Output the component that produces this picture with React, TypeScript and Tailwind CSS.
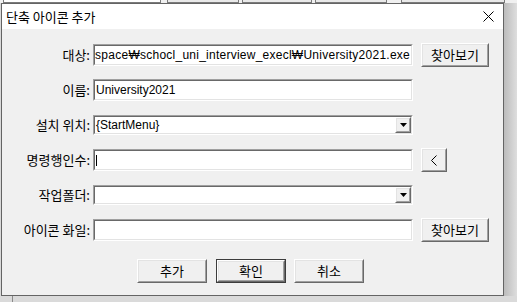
import type { ReactNode } from "react";

const KR = "font-['Noto_Sans_CJK_KR','Liberation_Sans',sans-serif]";
const LAT = "font-['Liberation_Sans','Noto_Sans_CJK_KR',sans-serif]";

function Sunken({ w, h, children }: { w: string; h: string; children?: ReactNode }) {
  return (
    <div className={`${w} ${h} border border-t-[#a0a0a0] border-l-[#a0a0a0] border-b-white border-r-white`}>
      <div className="h-full w-full border border-t-[#696969] border-l-[#696969] border-b-[#e3e3e3] border-r-[#e3e3e3] bg-white flex items-center overflow-hidden">
        {children}
      </div>
    </div>
  );
}

function Raised({ className, children, isDefault }: { className: string; children?: ReactNode; isDefault?: boolean }) {
  const inner = (
    <div className="h-full w-full border border-t-white border-l-white border-b-[#696969] border-r-[#696969]">
      <div className="h-full w-full border border-t-[#e3e3e3] border-l-[#e3e3e3] border-b-[#a0a0a0] border-r-[#a0a0a0] bg-[#f0f0f0] flex items-center justify-center">
        {children}
      </div>
    </div>
  );
  if (isDefault) {
    return <div className={`${className} border border-[#3c3c3c]`}>{inner}</div>;
  }
  return <div className={className}>{inner}</div>;
}

function Combo({ text }: { text?: string }) {
  return (
    <Sunken w="w-[320px]" h="h-[20px]">
      <div className={`flex-1 pl-[1px] text-[12px] text-black ${LAT}`}>{text}</div>
      <Raised className="w-[16px] h-[16px]">
        <svg width="7" height="4" viewBox="0 0 7 4">
          <path d="M0 0H7L3.5 4Z" fill="#000" />
        </svg>
      </Raised>
    </Sunken>
  );
}

function Row({ label, children, first }: { label: string; children: ReactNode; first?: boolean }) {
  return (
    <div className={`flex items-center h-[24px] ${first ? "" : "mt-[11px]"}`}>
      <div className={`w-[91px] pr-[3px] text-right text-[13px] text-black whitespace-nowrap ${KR}`}>{label}</div>
      {children}
    </div>
  );
}

function BgButton({ w }: { w: string }) {
  return <div className={`${w} h-full border-x border-b border-[#7a7a7a] bg-[#e9e9e9]`} />;
}

export default function App() {
  return (
    <div className="w-[517px] h-[302px] bg-[#d9d9d9] flex flex-col overflow-hidden">
      {/* window behind the dialog */}
      <div className="h-[3px] flex bg-[#f0f0f0] shrink-0">
        <div className="w-[3px]" />
        <div className="w-[158px] h-full border-x border-b border-[#7a7a7a] bg-white" />
        <div className="w-[6px]" />
        <BgButton w="w-[72px]" />
        <div className="w-[3px]" />
        <BgButton w="w-[70px]" />
        <div className="w-[3px]" />
        <BgButton w="w-[72px]" />
        <div className="w-[14px]" />
        <BgButton w="w-[104px]" />
      </div>

      <div className="flex h-[293px] shrink-0">
        <div className="w-[1px]" />
        <div className="w-[503px] h-full border border-[#646464] bg-[#f0f0f0] flex flex-col">
          <div className="h-[25px] bg-white flex items-center justify-between pl-[4px] pr-[9px] shrink-0">
            <span className={`text-[13px] text-black ${KR}`}>단축 아이콘 추가</span>
            <svg width="11" height="11" viewBox="0 0 11 11">
              <path d="M0.5 0.5L10.5 10.5M10.5 0.5L0.5 10.5" stroke="#000" strokeWidth="1" />
            </svg>
          </div>

          <div className="flex flex-col pt-[14px]">
            <Row label="대상:" first>
              <Sunken w="w-[320px]" h="h-[22px]">
                <div className={`w-full flex justify-end pr-[1px] text-[12px] tracking-[0.25px] text-black whitespace-nowrap ${LAT}`}>
                  space₩schocl_uni_interview_execl₩University2021.exe
                </div>
              </Sunken>
              <Raised className="ml-[8px] w-[68px] h-[24px]">
                <span className={`text-[13px] text-black ${KR}`}>찾아보기</span>
              </Raised>
            </Row>

            <Row label="이름:">
              <Sunken w="w-[320px]" h="h-[22px]">
                <span className={`pl-[1px] text-[12px] text-black ${LAT}`}>University2021</span>
              </Sunken>
            </Row>

            <Row label="설치 위치:">
              <Combo text="{StartMenu}" />
            </Row>

            <Row label="명령행인수:">
              <Sunken w="w-[320px]" h="h-[22px]">
                <div className="ml-[1px] w-[1px] h-[11px] bg-black" />
              </Sunken>
              <Raised className="ml-[8px] w-[26px] h-[24px]">
                <svg width="6" height="11" viewBox="0 0 6 11">
                  <path d="M5.5 0.5L0.5 5.5L5.5 10.5" stroke="#000" strokeWidth="1" fill="none" />
                </svg>
              </Raised>
            </Row>

            <Row label="작업폴더:">
              <Combo />
            </Row>

            <Row label="아이콘 화일:">
              <Sunken w="w-[320px]" h="h-[22px]" />
              <Raised className="ml-[8px] w-[68px] h-[24px]">
                <span className={`text-[13px] text-black ${KR}`}>찾아보기</span>
              </Raised>
            </Row>

            <div className="flex h-[24px] mt-[17px] pl-[135px]">
              <Raised className="w-[70px] h-[24px]">
                <span className={`text-[13px] text-black ${KR}`}>추가</span>
              </Raised>
              <Raised className="ml-[9px] w-[70px] h-[24px]" isDefault>
                <span className={`text-[13px] text-black ${KR}`}>확인</span>
              </Raised>
              <Raised className="ml-[8px] w-[70px] h-[24px]">
                <span className={`text-[13px] text-black ${KR}`}>취소</span>
              </Raised>
            </div>
          </div>
        </div>
        <div className="flex-1 bg-gradient-to-r from-[#bcbcbc] to-[#dedede]" />
      </div>

      <div className="flex-1 flex bg-[#dadada]">
        <div className="w-[12px]" />
        <div className="w-[1px] h-full bg-[#8a8a8a]" />
      </div>
    </div>
  );
}
